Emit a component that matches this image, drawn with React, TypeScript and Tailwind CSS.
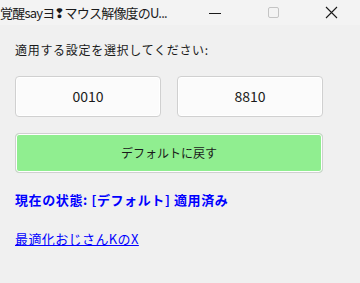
import React from 'react';

const jp = { fontFamily: '"Noto Sans CJK JP", "Noto Sans", sans-serif' };

function CaptionButtons() {
  return (
    <div className="relative z-10 flex h-[25px] shrink-0 items-center bg-[#f3f3f3]">
      <span className="flex h-[25px] w-[58px] items-center justify-center">
        <span className="mt-[1px] block h-0 w-[12px] border-t border-[#1a1a1a]" />
      </span>
      <span className="flex h-[25px] w-[58px] items-center justify-center">
        <span className="block h-[11px] w-[11px] rounded-[2px] border border-[#c4c4c4]" />
      </span>
      <span className="flex h-[25px] w-[58px] items-center justify-center">
        <svg width="13" height="13" viewBox="0 0 13 13" className="shrink-0">
          <path d="M1 1 L12 12 M12 1 L1 12" stroke="#1a1a1a" strokeWidth="1.1" />
        </svg>
      </span>
    </div>
  );
}

function ValueButton({ label }: { label: string }) {
  return (
    <button className="flex h-[41px] flex-1 items-center justify-center rounded-[4px] border border-[#d0d0d0] bg-[#fbfbfb] text-[14px] text-[#1a1a1a] shadow-[inset_0_0_0_1px_#ffffff]">
      {label}
    </button>
  );
}

export default function App() {
  return (
    <div className="flex h-[283px] w-[360px] flex-col bg-[#f0f0f0]" style={jp}>
      <div className="flex h-[25px] items-center bg-[#f3f3f3]">
        <span className="min-w-0 flex-1 whitespace-nowrap text-[13px] leading-[25px] tracking-[-0.8px] text-[#1a1a1a]">覚醒sayヨ❢マウス解像度のU...</span>
        <CaptionButtons />
      </div>

      <div className="flex flex-col px-[15px]">
        <p className="mt-[18px] text-[12px] leading-[14px] tracking-[0.7px] text-[#1a1a1a]">適用する設定を選択してください:</p>

        <div className="mt-[19px] flex gap-[16px] pr-[22px]">
          <ValueButton label="0010" />
          <ValueButton label="8810" />
        </div>

        <button className="mt-[16px] mr-[22px] flex h-[40px] items-center justify-center rounded-[4px] border border-[#d0d0d0] bg-[#90ee90] text-[12px] text-[#1a1a1a] shadow-[inset_0_0_0_1px_#ffffff]">
          デフォルトに戻す
        </button>

        <p className="mt-[19px] text-[13px] font-bold leading-[15px] tracking-[0.6px] text-[#0000ff]">現在の状態: [デフォルト] 適用済み</p>

        <a href="#" className="mt-[24px] w-fit text-[13px] leading-[15px] tracking-[0.4px] text-[#0000ff] underline">最適化おじさんKのX</a>
      </div>
    </div>
  );
}
